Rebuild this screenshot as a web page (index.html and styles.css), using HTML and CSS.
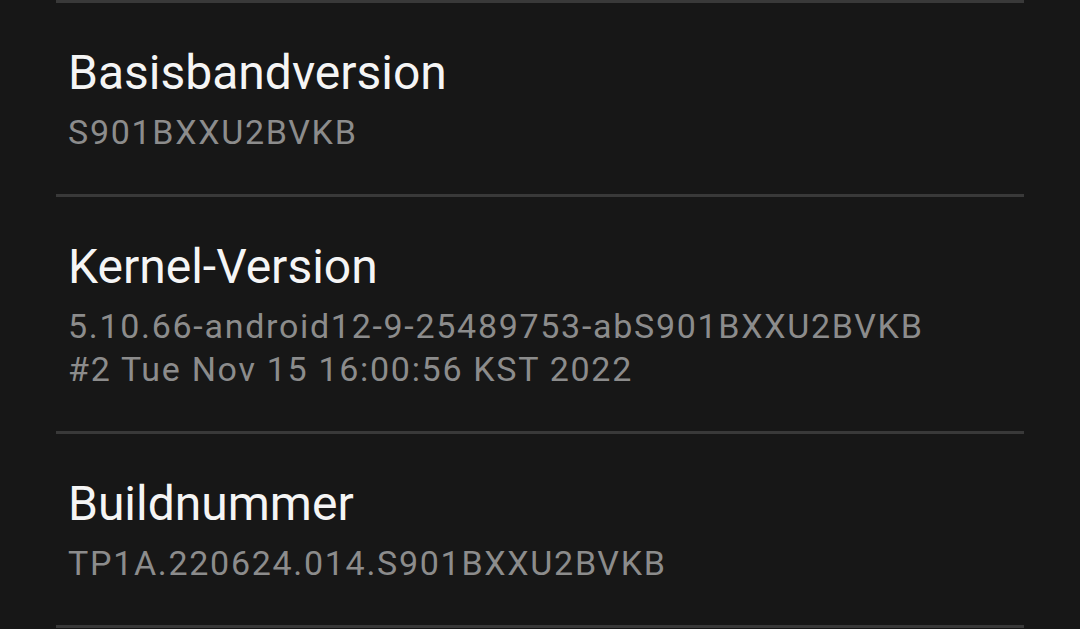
FILE: index.html
```html
<!DOCTYPE html>
<html lang="de">
<head>
    <meta charset="UTF-8">
    <meta name="viewport" content="width=device-width, initial-scale=1.0">
    <title>Softwareinformationen</title>
    <link rel="stylesheet" href="styles.css">
</head>
<body>

    <div class="info-list">
        <div class="info-item">
            <div class="info-title">Basisbandversion</div>
            <div class="info-value">S901BXXU2BVKB</div>
        </div>
        <div class="info-item">
            <div class="info-title">Kernel-Version</div>
            <div class="info-value">5.10.66-android12-9-25489753-abS901BXXU2BVKB<br>#2 Tue Nov 15 16:00:56 KST 2022</div>
        </div>
        <div class="info-item">
            <div class="info-title">Buildnummer</div>
            <div class="info-value">TP1A.220624.014.S901BXXU2BVKB</div>
        </div>
        <div class="info-end"></div>
    </div>

</body>
</html>
```

FILE: styles.css
```css
body {
    margin: 0;
    background-color: #171717;
    font-family: Roboto, "Noto Sans", sans-serif;
}
.info-list {
    margin-left: 56px;
    width: 968px;
}
.info-item {
    border-top: 3px solid #393939;
    padding: 42px 12px 40px;
}
.info-end {
    border-top: 3px solid #393939;
}
.info-title {
    color: #f5f5f5;
    font-size: 48px;
    line-height: 56px;
}
.info-value {
    color: #8c8c8c;
    font-size: 34px;
    line-height: 43px;
    letter-spacing: 1.7px;
    margin-top: 10px;
}
```
